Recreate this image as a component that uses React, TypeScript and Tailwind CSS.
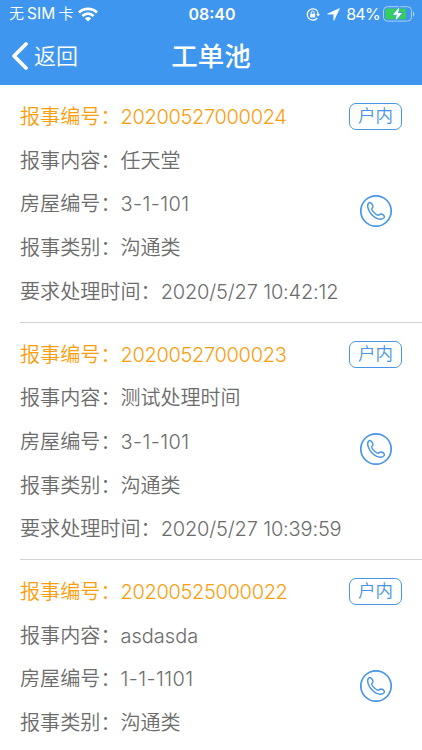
import type { ReactNode } from "react";

interface Order {
  id: string;
  content: string;
  house: string;
  category: string;
  deadline?: string;
}

const orders: Order[] = [
  { id: "20200527000024", content: "任天堂", house: "3-1-101", category: "沟通类", deadline: "2020/5/27 10:42:12" },
  { id: "20200527000023", content: "测试处理时间", house: "3-1-101", category: "沟通类", deadline: "2020/5/27 10:39:59" },
  { id: "20200525000022", content: "asdasda", house: "1-1-1101", category: "沟通类" },
];

function StatusBar() {
  return (
    <div className="grid h-7 grid-cols-[1fr_auto_1fr] items-center pl-[9px] pr-[7px] text-[16px] leading-7">
      <div className="flex items-center">
        <span className="text-[15px] font-[350]">无</span>
        <span className="ml-[3px] text-[15.5px] tracking-[0.1px]">SIM</span>
        <span className="ml-[3px] text-[15px] font-[350]">卡</span>
        <svg className="ml-[5px]" width="20" height="15" viewBox="0 0 20 15" fill="none" stroke="white" strokeWidth="2.7">
          <path d="M1 5.5a12.8 12.8 0 0 1 18 0" />
          <path d="M4.4 9a8 8 0 0 1 11.2 0" />
          <path d="M10 14.5 6.9 11.4a4.5 4.5 0 0 1 6.2 0Z" fill="white" stroke="none" />
        </svg>
      </div>
      <span className="font-semibold">08:40</span>
      <div className="flex items-center justify-end">
        <svg width="14" height="13" viewBox="0 0 14 13" fill="none" stroke="white" strokeWidth="1.3">
          <path d="M11.4 3.2A5.6 5.6 0 1 0 11.3 10" />
          <path d="M11.3 3.5a5.6 5.6 0 0 1 .8 3" />
          <path d="M10.2 6h3.8l-1.9 2.6z" fill="white" stroke="none" />
          <rect x="4.2" y="5.8" width="5" height="3.8" rx=".6" fill="white" stroke="none" />
          <path d="M5.2 6V4.7a1.5 1.5 0 0 1 3 0V6" strokeWidth="1" />
        </svg>
        <svg className="ml-[7px]" width="13" height="13" viewBox="0 0 13 13" fill="white" stroke="white" strokeWidth=".8" strokeLinejoin="round">
          <path d="M12.3.7.7 6h6.2v6.2z" />
        </svg>
        <span className="ml-[6px] text-[16px] tracking-[-0.7px]">84%</span>
        <svg className="ml-[3px]" width="32" height="16" viewBox="0 0 32 16">
          <rect x=".5" y=".7" width="28" height="14.4" rx="4" fill="none" stroke="#a9d1f8" />
          <path d="M30 5.3c1.8.8 1.8 4.4 0 5.2z" fill="#a9d1f8" />
          <rect x="2.4" y="2.6" width="20.6" height="10.6" rx="2" fill="#35cf5c" />
          <path d="M16.3 1.2 9.8 8.7h4L12.5 14.5l6.7-7.6h-4.1z" fill="white" stroke="#3e96ef" strokeWidth="1.2" paintOrder="stroke" />
        </svg>
      </div>
    </div>
  );
}

function NavBar() {
  return (
    <div className="grid h-[55px] grid-cols-[1fr_auto_1fr] items-center px-[11px]">
      <button className="flex items-center text-left">
        <svg width="18" height="30" viewBox="0 0 18 30" fill="none" stroke="white" strokeWidth="3.8" strokeLinecap="round" strokeLinejoin="round">
          <path d="M15 3 3 15l12 12" />
        </svg>
        <span className="ml-[5px] text-[22px] font-[350] leading-8">返回</span>
      </button>
      <h1 className="text-[26.5px] font-medium leading-10">工单池</h1>
    </div>
  );
}

function PhoneIcon() {
  return (
    <svg width="34" height="34" viewBox="0 0 34 34" fill="none" stroke="#4795e6">
      <circle cx="17" cy="17" r="15.2" strokeWidth="1.7" />
      <path
        d="M9.3 9.4C10 8.6 10.9 8.3 11.7 8.8C13 9.7 14 11.2 14 12.5C14 13.7 12.7 14 12.7 15C12.7 16.9 17.2 21.2 19.2 21.2C20.2 21.2 20.7 20 21.9 20C23.2 20 25 21.4 25.4 22.5C25.7 23.5 24.7 24.3 23.8 24.7C20.4 26 16 23.9 13.1 21.1C10.2 18.2 7.4 12.6 9.3 9.4Z"
        strokeWidth="1.4"
        strokeLinejoin="round"
      />
    </svg>
  );
}

function Row({ label, children }: { label: string; children: ReactNode }) {
  return (
    <div className="flex h-[43.6px] items-center whitespace-nowrap">
      <span className="text-[20.1px]">{label}：</span>
      {children}
    </div>
  );
}

function OrderCard({ order }: { order: Order }) {
  return (
    <li className="ml-5 flex h-[237.5px] justify-between border-b border-[#d2d2d6] pr-5 pt-[10.5px]">
      <div className="text-[20px] font-[350] text-[#6c6c6c]">
        <div className="text-[#fb9d0c]">
          <Row label="报事编号">
            <span className="tracking-[-0.32px]">{order.id}</span>
          </Row>
        </div>
        <Row label="报事内容">
          <span>{order.content}</span>
        </Row>
        <Row label="房屋编号">
          <span className="tracking-[0.4px]">{order.house}</span>
        </Row>
        <Row label="报事类别">
          <span>{order.category}</span>
        </Row>
        {order.deadline && (
          <Row label="要求处理时间">
            <span className="tracking-[-0.16px]">{order.deadline}</span>
          </Row>
        )}
      </div>
      <div className="flex shrink-0 flex-col items-center pt-[7.5px]">
        <span className="flex h-[27px] w-[53px] items-center justify-center rounded-[7px] border-[1.5px] border-[#4795e6] text-[17.5px] font-[350] text-[#4795e6]">
          户内
        </span>
        <div className="mt-[64px]">
          <PhoneIcon />
        </div>
      </div>
    </li>
  );
}

export default function App() {
  return (
    <div className="h-[750px] w-[422px] overflow-hidden bg-white font-['Inter','Noto_Sans_CJK_SC',sans-serif]">
      <header className="h-[85px] bg-[#3e96ef] text-white">
        <StatusBar />
        <NavBar />
      </header>
      <ul>
        {orders.map((order) => (
          <OrderCard key={order.id} order={order} />
        ))}
      </ul>
    </div>
  );
}
